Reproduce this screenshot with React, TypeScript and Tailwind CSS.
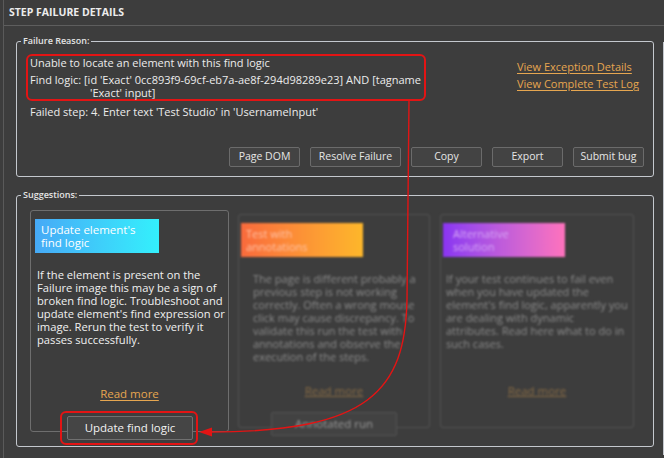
import React from "react";

const buttons = [
  { label: "Page DOM", w: "w-[71px]" },
  { label: "Resolve Failure", w: "w-[91px]" },
  { label: "Copy", w: "w-[71px]" },
  { label: "Export", w: "w-[71px]" },
  { label: "Submit bug", w: "w-[71px]" },
];

function Legend({ children }: { children: React.ReactNode }) {
  return (
    <legend className="ml-[4px] px-[2px] text-[9px] leading-[14px] font-semibold text-[#e4e4e4]">
      {children}
    </legend>
  );
}

function FadedCard({
  title,
  lines,
  gradient,
  titleColor,
  textLeft,
  button,
}: {
  title: string[];
  lines: string[];
  gradient: string;
  titleColor: string;
  textLeft: string;
  button?: string;
}) {
  return (
    <div className="relative mt-[4px] h-[214px] shrink-0">
      <div className="flex h-full flex-col rounded-[3px] border border-[#555555] blur-[1.3px]">
        <div className={`ml-[2px] mt-[8px] h-[34px] w-[122px] pl-[5px] pt-[4px] text-[11px] leading-[13px] ${gradient} ${titleColor}`}>
          {title.map((t) => (
            <div key={t}>{t}</div>
          ))}
        </div>
        <div className={`mt-[15px] ${textLeft} whitespace-nowrap text-[11px] leading-[13px] text-[#8c8c8c]`}>
          {lines.map((l) => (
            <div key={l}>{l}</div>
          ))}
        </div>
        <div className="mt-auto mb-[30px] text-center text-[11.5px] leading-[13px] text-[#8a6d45] underline">
          Read more
        </div>
      </div>
      {button && (
        <div className="absolute left-[33px] top-[198px] flex h-[24px] w-[126px] items-center justify-center rounded-[2px] border border-[#555555] bg-[#424242] text-[11.5px] text-[#9a9a9a] blur-[1.3px]">
          {button}
        </div>
      )}
    </div>
  );
}

export default function App() {
  return (
    <div
      className="relative h-[458px] w-[664px] overflow-hidden bg-[#3d3d3d] text-[#ececec]"
      style={{ fontFamily: "'Open Sans', 'Noto Sans', sans-serif" }}
    >
      <div className="ml-[3px] flex h-full flex-col border-l border-[#5a5a5a]">
        {/* Header */}
        <div className="flex h-[26px] shrink-0 items-center border-b border-[#5e5e5e] pl-[5px] text-[10.5px] font-bold text-[#ececec]">
          STEP FAILURE DETAILS
        </div>

        <div className="flex flex-1">
          <div className="flex flex-col pl-[12px]">
            {/* Failure reason */}
            <fieldset className="mt-[8px] w-[638px] rounded-[3px] border border-[#c4c8ce]">
              <Legend>Failure Reason:</Legend>
              <div className="flex h-[128px] flex-col px-[9px] pt-[6px] pb-[9px]">
                <div className="flex justify-between">
                  <div className="flex flex-col">
                    <div className="h-[47px] w-[400px] rounded-[6px] border-2 border-[#e31414] px-[2px] text-[11px] leading-[13px] whitespace-nowrap">
                      <div>Unable to locate an element with this find logic</div>
                      <div className="mt-[4px] flex">
                        <span className="w-[54px]">Find logic:</span>
                        <span>
                          [id 'Exact' 0cc893f9-69cf-eb7a-ae8f-294d98289e23] AND [tagname
                          <br />
                          <span className="pl-[6px]">'Exact' input]</span>
                        </span>
                      </div>
                    </div>
                    <div className="mt-[4px] pl-[4px] text-[11px] leading-[13px] whitespace-nowrap">
                      Failed step: 4. Enter text 'Test Studio' in 'UsernameInput'
                    </div>
                  </div>
                  <div className="flex w-[127px] flex-col text-[11px] leading-[13px] text-[#e6a650] whitespace-nowrap">
                    <span className="mt-[6px] underline underline-offset-2">View Exception Details</span>
                    <span className="mt-[4px] underline underline-offset-2">View Complete Test Log</span>
                  </div>
                </div>
                <div className="mt-auto flex justify-end gap-[10px]">
                  {buttons.map((b) => (
                    <button
                      key={b.label}
                      className={`flex h-[20px] ${b.w} items-center justify-center rounded-[2px] border border-[#6b6b6b] bg-[#434343] text-[10.5px] text-[#e6e6e6]`}
                    >
                      {b.label}
                    </button>
                  ))}
                </div>
              </div>
            </fieldset>

            {/* Suggestions */}
            <fieldset className="mt-[11px] w-[638px] rounded-[3px] border border-[#c4c8ce]">
              <Legend>Suggestions:</Legend>
              <div className="flex h-[244px] items-start gap-[9px] pl-[13px] pt-[8px]">
                <div className="relative h-[222px] w-[199px] shrink-0">
                  <div className="flex h-full flex-col rounded-[3px] border border-[#6e6e6e]">
                    <div className="ml-[4px] mt-[8px] h-[34px] w-[124px] bg-gradient-to-r from-[#46a9f6] to-[#33f0fc] pl-[6px] pt-[4px] text-[11.5px] leading-[13px] text-white">
                      <div>Update element's</div>
                      <div>find logic</div>
                    </div>
                    <div className="mt-[15px] px-[6px] text-[11.2px] leading-[13px] whitespace-nowrap text-[#f0f0f0]">
                      <div>If the element is present on the</div>
                      <div>Failure image this may be a sign of</div>
                      <div>broken find logic. Troubleshoot and</div>
                      <div>update element's find expression or</div>
                      <div>image. Rerun the test to verify it</div>
                      <div>passes successfully.</div>
                    </div>
                    <div className="mt-auto mb-[31px] text-center text-[11.5px] leading-[13px] text-[#e6a650] underline underline-offset-2">
                      Read more
                    </div>
                  </div>
                  <div className="absolute left-[30px] top-[201px] h-[34px] w-[138px] rounded-[6px] border-2 border-[#e31414] pl-[5px] pt-[3px]">
                    <button className="flex h-[24px] w-[126px] items-center justify-center rounded-[2px] border border-[#707070] bg-[#454545] text-[11.5px] text-[#f2f2f2]">
                      Update find logic
                    </button>
                  </div>
                </div>

                <div className="w-[192px]">
                  <FadedCard
                    title={["Test with", "annotations"]}
                    lines={[
                      "The page is different probably a",
                      "previous step is not working",
                      "correctly. Often a wrong mouse",
                      "click may cause discrepancy. To",
                      "validate this run the test with",
                      "annotations and observe the",
                      "execution of the steps.",
                    ]}
                    gradient="bg-gradient-to-r from-[#f96a3c] to-[#fdb72a]"
                    titleColor="text-[#ffc4a8]"
                    textLeft="pl-[14px]"
                    button="Annotated run"
                  />
                </div>
                <div className="ml-[1px] w-[194px]">
                  <FadedCard
                    title={["Alternative", "solution"]}
                    lines={[
                      "If your test continues to fail even",
                      "when you have updated the",
                      "element's find logic, apparently you",
                      "are dealing with dynamic",
                      "attributes. Read here what to do in",
                      "such cases.",
                    ]}
                    gradient="bg-gradient-to-r from-[#8a34f2] to-[#ff72bc]"
                    titleColor="text-[#d6a6f6] pl-[10px]"
                    textLeft="pl-[5px]"
                  />
                </div>
              </div>
            </fieldset>
          </div>
          <div className="ml-[9px] mt-[16px] mb-[3px] w-px bg-[#c4c8ce]" />
        </div>
      </div>

      {/* Connector arrow */}
      <svg className="pointer-events-none absolute inset-0" width="664" height="458" viewBox="0 0 664 458">
        <path d="M409 101 L407 300 C405 390 370 432 210 432" fill="none" stroke="#e31414" strokeWidth="1.4" />
        <polygon points="199,432 212,427.5 212,436.5" fill="#e31414" />
      </svg>
    </div>
  );
}
